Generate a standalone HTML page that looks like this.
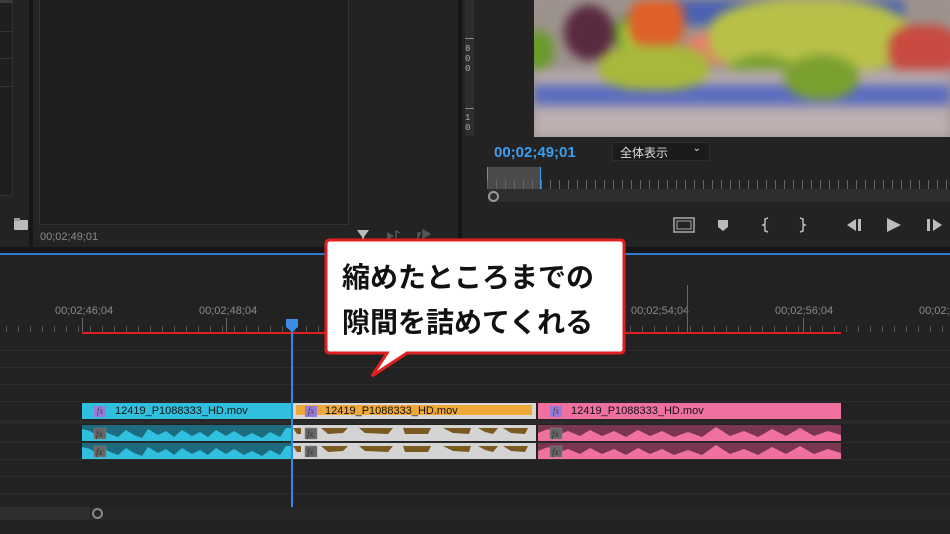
<!DOCTYPE html>
<html><head><meta charset="utf-8"><style>
*{margin:0;padding:0;box-sizing:border-box}
body{width:950px;height:534px;background:#1d1d1d;position:relative;overflow:hidden;font-family:"Liberation Sans","Noto Sans CJK JP",sans-serif}
.a{position:absolute}
.t{color:#8a8a8a;font-size:11px}
.hl{position:absolute;left:0;width:950px;height:1px;background:#2c2c2c}
.lbl{position:absolute;font-size:11px;color:#111;white-space:nowrap}
.fx{position:absolute;width:12px;height:11px;font-size:9px;font-style:italic;font-family:"Liberation Serif",serif;text-align:center;line-height:11px}
.img div{position:absolute}
</style></head><body>
<!-- top left panels -->
<div class="a" style="left:0;top:0;width:29px;height:247px;background:#232323"></div>
<div class="a" style="left:0;top:0;width:13px;height:196px;border:1px solid #303030;border-left:none;background:#1f1f1f"></div>
<div class="a" style="left:0;top:0;width:13px;height:3px;background:#3a3a3a"></div>
<div class="a" style="left:0;top:31px;width:13px;height:1px;background:#333"></div>
<div class="a" style="left:0;top:58px;width:13px;height:1px;background:#333"></div>
<div class="a" style="left:0;top:86px;width:13px;height:1px;background:#333"></div>
<div class="a" style="left:14px;top:220px;width:14px;height:10px;background:#bbb;border-radius:1px"></div>
<div class="a" style="left:14px;top:218px;width:6px;height:3px;background:#999"></div>
<div class="a" style="left:29px;top:0;width:4px;height:247px;background:#161616"></div>
<div class="a" style="left:33px;top:0;width:427px;height:247px;background:#232323"></div>
<div class="a" style="left:39px;top:0;width:310px;height:225px;background:#1e1e1e;border:1px solid #333;border-top:none"></div>
<div class="a t" style="left:40px;top:231px">00;02;49;01</div>
<svg class="a" style="left:355px;top:228px" width="80" height="14"><path d="M2,2 L14,2 L9,9 L9,13 L7,13 L7,9Z" fill="#bbb"/><path d="M32,4 L32,12 L39,8Z" fill="#555"/><path d="M41,12 L41,3 L45,5" stroke="#555" fill="none" stroke-width="1.5"/><path d="M63,12 L63,5 L66,5 M68,2 L68,10 L75,6Z" stroke="#555" fill="#555" stroke-width="1.5"/></svg>
<div class="a" style="left:458px;top:0;width:4px;height:247px;background:#161616"></div>
<!-- program monitor -->
<div class="a" style="left:462px;top:0;width:488px;height:247px;background:#232323"></div>
<div class="a" style="left:465px;top:0;width:9px;height:136px;background:#2e2e2e"></div>
<div class="a" style="left:465px;top:38px;width:9px;height:1px;background:#888"></div>
<div class="a" style="left:465px;top:108px;width:9px;height:1px;background:#888"></div>
<div class="a" style="left:465px;top:44px;font-size:9px;color:#aaa;line-height:10px;font-family:'Liberation Mono',monospace">8<br>0<br>0</div>
<div class="a" style="left:465px;top:113px;font-size:9px;color:#aaa;line-height:10px;font-family:'Liberation Mono',monospace">1<br>0</div>
<div class="a" style="left:534px;top:0;width:416px;height:137px;overflow:hidden;background:#a09490">
<div class="img" style="position:absolute;left:0;top:0;width:416px;height:137px;filter:blur(5px)">
 <div style="left:0;top:0;width:416px;height:70px;background:#9c928c"></div>
 <div style="left:140px;top:0;width:230px;height:25px;background:#4a62b0"></div>
 <div style="left:30px;top:5px;width:50px;height:55px;border-radius:50%;background:#5a2a40"></div>
 <div style="left:-10px;top:30px;width:30px;height:40px;border-radius:50%;background:#6a9a2a"></div>
 <div style="left:80px;top:12px;width:55px;height:45px;border-radius:50%;background:#a8c83a;border:5px solid #5a8a20"></div>
 <div style="left:95px;top:0;width:55px;height:45px;border-radius:30%;background:#e0602a"></div>
 <div style="left:150px;top:30px;width:90px;height:35px;border-radius:50%;background:#e8806a"></div>
 <div style="left:65px;top:45px;width:110px;height:45px;border-radius:40%;background:#a8b83a"></div>
 <div style="left:175px;top:0;width:200px;height:75px;border-radius:40%;background:#b8c048"></div>
 <div style="left:190px;top:55px;width:75px;height:45px;border-radius:50%;background:#7aa030"></div>
 <div style="left:355px;top:25px;width:70px;height:50px;border-radius:40%;background:#c84a40"></div>
 <div style="left:0;top:70px;width:416px;height:67px;background:#b4a8ac"></div>
 <div style="left:0;top:85px;width:416px;height:20px;background:#5a6cc0"></div>
 <div style="left:65px;top:45px;width:110px;height:45px;border-radius:40%;background:#a8b83a"></div>
 <div style="left:250px;top:55px;width:75px;height:45px;border-radius:50%;background:#7aa030"></div>
 <div style="left:0;top:112px;width:416px;height:25px;background:#bcb0b2"></div>
</div></div>
<div class="a" style="left:494px;top:144px;color:#3a9ef0;font-size:15px;font-weight:bold">00;02;49;01</div>
<div class="a" style="left:612px;top:142px;width:98px;height:19px;background:#1b1b1b;border:1px solid #2e2e2e;color:#ddd;font-size:12px;padding:1px 0 0 7px">全体表示<span style="position:absolute;right:8px;top:0;font-size:10px">⌄</span></div>
<div class="a" style="left:487px;top:167px;width:54px;height:22px;background:#4a4a4a;border-left:1px solid #3a9ef0;border-right:1px solid #3a9ef0"></div>
<div class="a" style="left:487px;top:180px;width:463px;height:9px;background:repeating-linear-gradient(90deg,#666 0 1px,transparent 1px 9px)"></div>
<div class="a" style="left:488px;top:189px;width:462px;height:13px;background:#2e2e2e"></div>
<div class="a" style="left:488px;top:191px;width:11px;height:11px;border:2px solid #999;border-radius:50%"></div>
<svg class="a" style="left:670px;top:215px" width="280" height="20"><rect x="4" y="3" width="20" height="14" fill="none" stroke="#aaa" stroke-width="1.5"/><rect x="7" y="6" width="14" height="8" fill="none" stroke="#aaa"/><path d="M48,5 L58,5 L58,12 L53,16 L48,12Z" fill="#bbb"/><path d="M98,3 L95,4 L95,9 L93,10 L95,11 L95,16 L98,17" stroke="#bbb" fill="none" stroke-width="1.5"/><path d="M130,3 L133,4 L133,9 L135,10 L133,11 L133,16 L130,17" stroke="#bbb" fill="none" stroke-width="1.5"/><path d="M186,4 L177,10 L186,16Z M188,4 L191,4 L191,16 L188,16Z" fill="#bbb"/><path d="M217,3 L231,10 L217,17Z" fill="#bbb"/><path d="M257,4 L260,4 L260,16 L257,16Z M263,4 L272,10 L263,16Z" fill="#bbb"/></svg>
<!-- timeline -->
<div class="a" style="left:0;top:247px;width:950px;height:6px;background:#161616"></div>
<div class="a" style="left:0;top:253px;width:950px;height:2px;background:#2d7bd0"></div>
<div class="a" style="left:0;top:255px;width:950px;height:279px;background:#222"></div>
<div class="a t" style="left:55px;top:305px">00;02;46;04</div>
<div class="a t" style="left:199px;top:305px">00;02;48;04</div>
<div class="a t" style="left:631px;top:305px">00;02;54;04</div>
<div class="a t" style="left:775px;top:305px">00;02;56;04</div>
<div class="a t" style="left:919px;top:305px">00;02;</div>
<div class="a" style="left:0;top:326px;width:950px;height:6px;background:repeating-linear-gradient(90deg,transparent 0 6px,#555 6px 7px,transparent 7px 12px)"></div>
<div class="a" style="left:82px;top:318px;width:1px;height:14px;background:#666"></div>
<div class="a" style="left:226px;top:318px;width:1px;height:14px;background:#666"></div>
<div class="a" style="left:687px;top:285px;width:1px;height:47px;background:#666"></div>
<div class="a" style="left:803px;top:318px;width:1px;height:14px;background:#666"></div>
<div class="a" style="left:82px;top:332px;width:759px;height:2px;background:#e02020"></div>
<div class="hl" style="top:350px"></div><div class="hl" style="top:367px"></div><div class="hl" style="top:384px"></div><div class="hl" style="top:401px"></div>
<div class="a" style="left:0;top:420px;width:950px;height:4px;background:#2a2a2a"></div>
<div class="hl" style="top:442px"></div><div class="hl" style="top:459px"></div><div class="hl" style="top:476px"></div><div class="hl" style="top:493px"></div>
<div class="a" style="left:0;top:507px;width:950px;height:13px;background:#262626"></div>
<div class="a" style="left:0;top:507px;width:90px;height:13px;background:#2e2e2e"></div>
<div class="a" style="left:92px;top:508px;width:11px;height:11px;border:2px solid #888;border-radius:50%"></div>
<!-- clips -->
<div class="a" style="left:82px;top:403px;width:209px;height:16px;background:#2ec0de"></div>
<div class="fx" style="left:94px;top:406px;background:#9a7ad8;color:#444">fx</div>
<div class="lbl" style="left:115px;top:405px">12419_P1088333_HD.mov</div>
<div class="a" style="left:293px;top:403px;width:243px;height:16px;background:#d8d8d8"></div>
<div class="a" style="left:296px;top:405px;width:236px;height:10px;background:#f0a838"></div>
<div class="fx" style="left:305px;top:406px;background:#9a7ad8;color:#444">fx</div>
<div class="lbl" style="left:325px;top:405px">12419_P1088333_HD.mov</div>
<div class="a" style="left:538px;top:403px;width:303px;height:16px;background:#f070a0"></div>
<div class="fx" style="left:550px;top:406px;background:#9a7ad8;color:#444">fx</div>
<div class="lbl" style="left:571px;top:405px">12419_P1088333_HD.mov</div>
<svg class="a" style="left:82px;top:425px" width="760" height="34">
<defs>
<path id="cw" d="M0,16 L0,4 L8,6 L14,10 L18,4 L28,9 L36,12 L44,5 L52,10 L60,13 L66,4 L76,10 L84,6 L92,12 L100,5 L110,11 L118,7 L126,12 L134,5 L144,11 L152,6 L162,12 L170,8 L180,13 L188,7 L198,12 L204,3 L209,3 L209,16Z"/>
<path id="pw" d="M0,16 L0,8 L10,4 L20,10 L30,6 L42,11 L52,5 L64,11 L76,6 L88,12 L100,5 L112,11 L124,6 L136,12 L150,7 L164,12 L178,2 L192,11 L206,6 L220,12 L234,4 L248,11 L262,3 L276,11 L290,6 L303,10 L303,16Z"/>
<path id="bw" d="M0,3 L8,3 L8,9 L4,9Z M28,3 L55,3 L50,8 L35,9Z M66,3 L100,3 L95,9 L72,8Z M110,3 L138,3 L135,9 L112,9Z M150,3 L178,3 L176,9 L160,8Z M185,3 L205,3 L200,9 L192,7Z M210,3 L235,3 L232,9 L218,8Z"/>
</defs>
<rect x="0" y="0" width="209" height="16" fill="#1d6b7e"/><use href="#cw" fill="#2ec0de"/>
<rect x="0" y="18" width="209" height="16" fill="#1d6b7e"/><use href="#cw" y="18" fill="#2ec0de"/>
<rect x="211" y="0" width="243" height="16" fill="#d4d4d4"/><use href="#bw" x="211" fill="#7a5a20"/>
<rect x="211" y="18" width="243" height="16" fill="#d4d4d4"/><use href="#bw" x="211" y="18" fill="#7a5a20"/>
<rect x="456" y="0" width="303" height="16" fill="#7a3550"/><use href="#pw" x="456" fill="#f070a0"/>
<rect x="456" y="18" width="303" height="16" fill="#7a3550"/><use href="#pw" x="456" y="18" fill="#f070a0"/>
<g fill="#666" stroke="#888" stroke-width=".5"><rect x="12" y="3" width="12" height="11"/><rect x="12" y="21" width="12" height="11"/><rect x="223" y="3" width="12" height="11"/><rect x="223" y="21" width="12" height="11"/><rect x="468" y="3" width="12" height="11"/><rect x="468" y="21" width="12" height="11"/></g>
<g font-size="9" font-style="italic" fill="#333" font-family="Liberation Serif"><text x="14" y="12">fx</text><text x="14" y="30">fx</text><text x="225" y="12">fx</text><text x="225" y="30">fx</text><text x="470" y="12">fx</text><text x="470" y="30">fx</text></g>
</svg>
<!-- playhead -->
<div class="a" style="left:291px;top:320px;width:2px;height:187px;background:#2d8ae8"></div>
<svg class="a" style="left:286px;top:319px" width="13" height="14"><path d="M0,0 L12,0 L12,8 L6,13 L0,8Z" fill="#3a8ee8"/></svg>
<!-- callout -->
<svg class="a" style="left:320px;top:236px" width="310" height="146"><path d="M10,4 L300,4 Q304,4 304,8 L304,113 Q304,117 300,117 L87,117 L52,140 L67,117 L10,117 Q6,117 6,113 L6,8 Q6,4 10,4Z" fill="#fff" stroke="#e02020" stroke-width="3"/></svg>
<div class="a" style="left:342px;top:255px;font-size:28px;font-weight:bold;color:#111;line-height:45px;letter-spacing:0px">縮めたところまでの<br>隙間を詰めてくれる</div>
</body></html>
